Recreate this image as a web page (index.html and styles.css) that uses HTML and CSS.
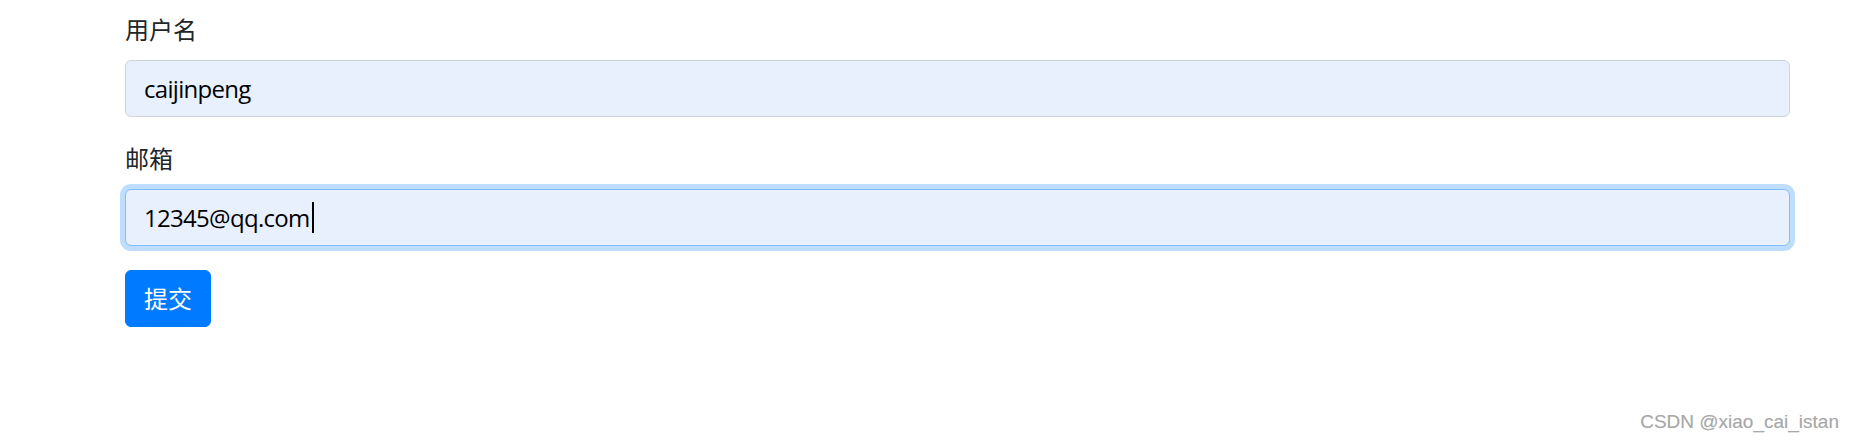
FILE: index.html
```html
<!DOCTYPE html>
<html lang="zh-CN">
<head>
<meta charset="utf-8">
<title>表单</title>
<link rel="stylesheet" href="styles.css">
</head>
<body>
<div class="container">
  <form class="form">
    <div class="form-group">
      <label class="form-label">用户名</label>
      <div class="form-control">caijinpeng</div>
    </div>
    <div class="form-group">
      <label class="form-label">邮箱</label>
      <div class="form-control is-focused">12345@qq.com<span class="caret"></span></div>
    </div>
    <button type="button" class="btn btn-primary">提交</button>
  </form>
</div>
<div class="watermark">CSDN @xiao_cai_istan</div>
</body>
</html>
```
FILE: styles.css
```css
* { box-sizing: border-box; }
html, body { margin: 0; padding: 0; }
body {
  width: 1851px;
  height: 444px;
  background: #fff;
  color: #212529;
  font-family: "Open Sans", "Noto Sans CJK SC", sans-serif;
  font-size: 24px;
  line-height: 1.5;
  position: relative;
  overflow: hidden;
}
.container {
  padding: 12px 0 0 125px;
}
.form {
  width: 1665px;
}
.form-group {
  margin-bottom: 24px;
}
.form-label {
  display: block;
  margin-bottom: 12px;
  line-height: 36px;
}
.form-control {
  display: flex;
  align-items: center;
  height: 57px;
  padding: 9px 18px;
  background: #e8f0fe;
  border: 1px solid #ced4da;
  border-radius: 6px;
  color: #000;
  line-height: 36px;
  letter-spacing: -0.7px;
}
.form-control.is-focused {
  border-color: #80bdff;
  box-shadow: 0 0 0 5px rgba(0, 123, 255, 0.25);
}
.caret {
  display: inline-block;
  width: 2px;
  height: 31px;
  margin-left: 2px;
  background: #000;
}
.btn {
  display: block;
  height: 57px;
  padding: 9px 18px;
  border: 1px solid #007bff;
  border-radius: 6px;
  background: #007bff;
  color: #fff;
  font-family: inherit;
  font-size: 24px;
  line-height: 36px;
}
.watermark {
  position: absolute;
  right: 12px;
  bottom: 8px;
  font-family: "Liberation Sans", Arial, sans-serif;
  font-size: 19px;
  color: #a8a8a8;
  text-shadow: 0 0 1px #e0e0e0;
}
```
